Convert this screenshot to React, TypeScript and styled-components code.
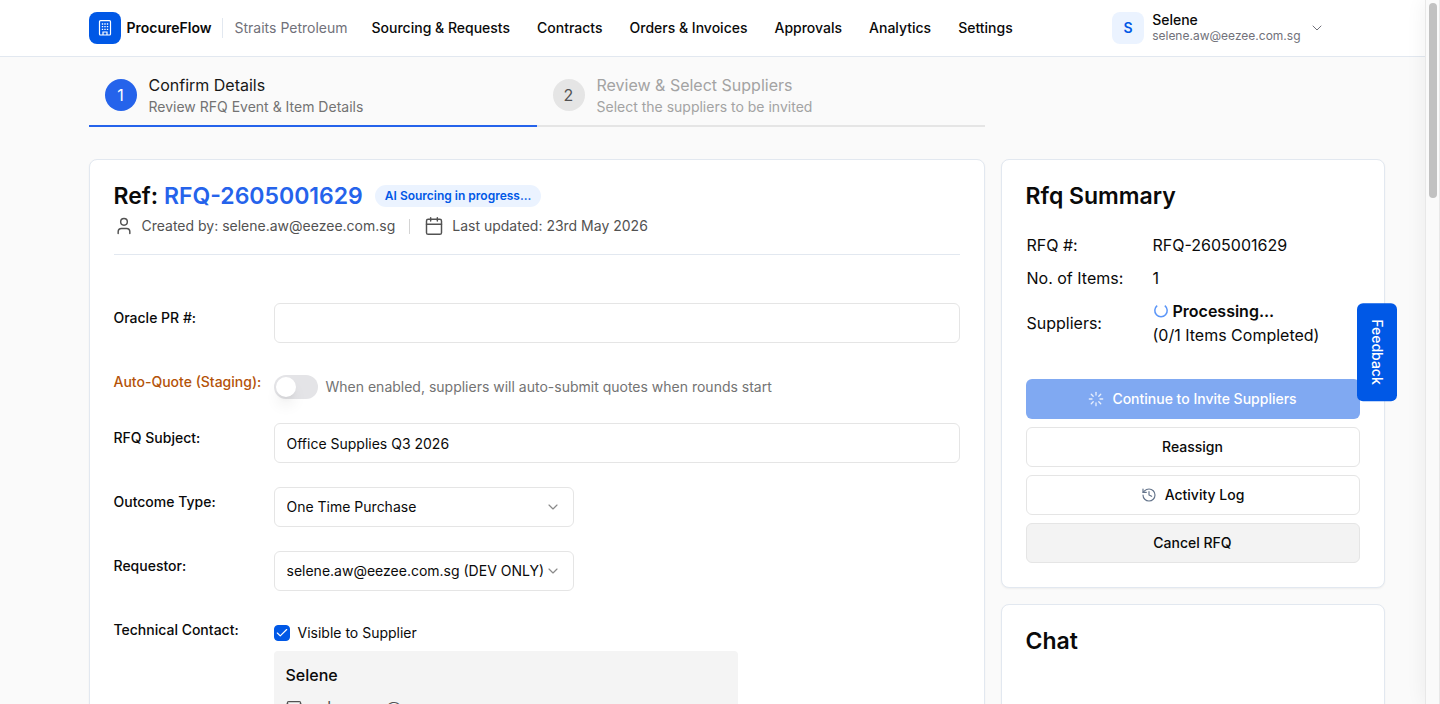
import React, { useState } from 'react';
import styled, { createGlobalStyle, css } from 'styled-components';
import { Calendar, Check, ChevronDown, History, Loader, Mail, User } from 'lucide-react';

const color = {
  primary: '#0058e6',
  blue: '#2563eb',
  text: '#0a0a0a',
  muted: '#737373',
  line: '#e2e8f0',
  field: '#e5e5e5',
};

const GlobalStyle = createGlobalStyle`
  *, *::before, *::after { box-sizing: border-box; }
  body {
    margin: 0;
    background: #fafafa;
    color: ${color.text};
    font-family: Inter, "Liberation Sans", sans-serif;
    font-size: 14px;
    line-height: 20px;
  }
  h1, h2, h3, p { margin: 0; }
  button, input, select { font: inherit; color: inherit; }
  svg { display: block; flex-shrink: 0; }
`;

const Page = styled.div`
  height: 100vh;
  overflow: hidden;
  padding-right: 15px;
`;

const Header = styled.header`
  background: #fff;
  border-bottom: 1px solid ${color.line};
`;

const HeaderInner = styled.div`
  display: flex;
  align-items: center;
  gap: 24px;
  max-width: 1280px;
  height: 56px;
  margin: 0 auto;
  padding: 0 16px;
  white-space: nowrap;
`;

const Brand = styled.a`
  display: flex;
  align-items: center;
  color: inherit;
  text-decoration: none;
`;

const Logo = styled.span`
  display: grid;
  place-items: center;
  width: 32px;
  height: 32px;
  margin-right: 6px;
  border-radius: 8px;
  background: ${color.primary};
  color: #fff;
`;

const BrandName = styled.span`
  font-weight: 600;
`;

const Company = styled.span`
  margin-left: 10px;
  padding-left: 12px;
  border-left: 1px solid ${color.line};
  color: #71717a;
`;

const Nav = styled.nav`
  display: flex;
  gap: 27px;
`;

const NavLink = styled.a`
  color: inherit;
  font-weight: 500;
  text-decoration: none;
`;

const Account = styled.button`
  display: flex;
  align-items: center;
  gap: 8px;
  margin-left: auto;
  padding: 0 12px 0 0;
  border: 0;
  background: none;
  text-align: left;
`;

const Avatar = styled.span`
  display: grid;
  place-items: center;
  width: 32px;
  height: 32px;
  border-radius: 8px;
  background: #ebf3ff;
  color: ${color.primary};
  font-weight: 600;
`;

const AccountText = styled.span`
  display: flex;
  flex-direction: column;
  line-height: 16px;
`;

const AccountName = styled.span`
  font-weight: 500;
`;

const AccountEmail = styled.span`
  color: #71717a;
  font-size: 12px;
`;

const Container = styled.div`
  max-width: 1280px;
  margin: 0 auto;
  padding: 0 16px;
`;

const Columns = styled.main`
  display: grid;
  grid-template-columns: minmax(0, 1fr) 384px;
  align-items: start;
  column-gap: 16px;
  row-gap: 32px;
  margin-right: -48px;
`;

const Steps = styled.ol`
  display: flex;
  grid-column: 1 / -1;
  margin: 0 400px 0 0;
  padding: 0;
  list-style: none;
`;

const Step = styled.li<{ $active?: boolean }>`
  display: flex;
  flex: 1;
  align-items: center;
  gap: 12px;
  padding: 16px 16px 8px;
  border-bottom: 2px solid ${(p) => (p.$active ? color.blue : color.field)};
  color: ${(p) => (p.$active ? color.muted : '#a3a3a3')};
`;

const StepNumber = styled.span<{ $active?: boolean }>`
  display: grid;
  place-items: center;
  width: 32px;
  height: 32px;
  border-radius: 50%;
  background: ${(p) => (p.$active ? color.blue : color.field)};
  color: ${(p) => (p.$active ? '#fff' : '#525252')};
  font-size: 16px;
`;

const StepTitle = styled.div<{ $active?: boolean }>`
  color: ${(p) => (p.$active ? '#171717' : '#a3a3a3')};
  font-size: 16px;
  line-height: 24px;
`;

const Card = styled.section`
  padding: 24px;
  border: 1px solid ${color.line};
  border-radius: 8px;
  background: #fff;
  box-shadow: 0 1px 2px rgba(0, 0, 0, 0.05);
`;

const Aside = styled.aside`
  display: flex;
  flex-direction: column;
  gap: 16px;
`;

const ChatCard = styled(Card)`
  min-height: 320px;
`;

const CardTitle = styled.h2`
  font-size: 23px;
  font-weight: 600;
  line-height: 24px;
`;

const FormHead = styled.header`
  margin-bottom: 48px;
  padding-bottom: 18px;
  border-bottom: 1px solid ${color.line};
`;

const TitleRow = styled.div`
  display: flex;
  align-items: center;
  gap: 12px;
  height: 24px;
`;

const RefNumber = styled.span`
  color: ${color.blue};
`;

const Badge = styled.span`
  padding: 0 10px;
  border-radius: 11px;
  background: #ebf3ff;
  color: ${color.primary};
  font-size: 12px;
  font-weight: 600;
  line-height: 22px;
`;

const Meta = styled.div`
  display: flex;
  align-items: center;
  margin-top: 8px;
  color: #525252;
`;

const MetaItem = styled.span`
  display: flex;
  align-items: center;
  gap: 8px;

  & + & {
    margin-left: 14px;
  }
  & + &::before {
    content: '';
    width: 1px;
    height: 15px;
    margin-right: 6px;
    background: #d4d4d4;
  }
`;

const Form = styled.form`
  display: grid;
  row-gap: 24px;
`;

const Row = styled.div`
  display: grid;
  grid-template-columns: 160px minmax(0, 1fr);
  align-items: start;
`;

const labelText = css<{ $warn?: boolean }>`
  padding-top: 8px;
  color: ${(p) => (p.$warn ? '#b45309' : 'inherit')};
  font-weight: 500;
  line-height: 14px;
`;

const Label = styled.label<{ $warn?: boolean }>`
  ${labelText}
`;

const GroupLabel = styled.span`
  ${labelText}
`;

const field = css`
  width: 100%;
  height: 40px;
  padding: 0 12px;
  border: 1px solid ${color.field};
  border-radius: 6px;
  background: #fff;
`;

const TextInput = styled.input`
  ${field}
`;

const SelectBox = styled.div`
  display: grid;
  align-items: center;
  max-width: 300px;

  > * {
    grid-area: 1 / 1;
  }
  > svg {
    justify-self: end;
    margin-right: 13px;
    color: #8a8a8a;
    pointer-events: none;
  }
`;

const Select = styled.select`
  ${field}
  padding-right: 28px;
  appearance: none;
`;

const SwitchRow = styled.div`
  display: flex;
  align-items: center;
  gap: 8px;
  padding-top: 8px;
  color: ${color.muted};
`;

const Switch = styled.input`
  display: flex;
  flex-shrink: 0;
  align-items: center;
  width: 44px;
  height: 24px;
  margin: 0;
  padding: 2px;
  border-radius: 12px;
  background: #e4e4e7;
  appearance: none;

  &::before {
    content: '';
    width: 20px;
    height: 20px;
    border-radius: 50%;
    background: #fff;
    box-shadow: 0 10px 15px -3px rgba(0, 0, 0, 0.1), 0 4px 6px -4px rgba(0, 0, 0, 0.1);
  }
  &:checked {
    justify-content: flex-end;
    background: ${color.primary};
  }
`;

const CheckRow = styled.label`
  display: flex;
  align-items: center;
  gap: 8px;
  padding: 8px 0;
`;

const CheckBoxWrap = styled.span`
  display: grid;
  place-items: center;

  > * {
    grid-area: 1 / 1;
  }
  > svg {
    color: #fff;
    pointer-events: none;
  }
`;

const CheckBox = styled.input`
  width: 16px;
  height: 16px;
  margin: 0;
  border: 1px solid ${color.primary};
  border-radius: 4px;
  appearance: none;

  &:checked {
    background: ${color.primary};
  }
`;

const Contact = styled.div`
  display: grid;
  row-gap: 8px;
  max-width: 464px;
  padding: 12px;
  border-radius: 4px;
  background: #f4f4f4;
  font-size: 16px;
  line-height: 24px;
`;

const ContactName = styled.h3`
  font-size: 16px;
  font-weight: 500;
`;

const ContactLine = styled.div`
  display: flex;
  align-items: center;
  gap: 8px;
  color: #525252;
`;

const SummaryTable = styled.table`
  width: 100%;
  margin: 24px 0;
  border-collapse: collapse;
  font-size: 16px;
  line-height: 24px;

  th, td {
    padding: 1px 1px 8px;
    text-align: left;
    font-weight: 400;
  }
  th {
    width: 126px;
  }
`;

const Processing = styled.div`
  display: flex;
  align-items: center;
  gap: 4px;
  font-weight: 600;
`;

const Actions = styled.div`
  display: grid;
  row-gap: 8px;
`;

const Button = styled.button<{ $kind?: 'primary' | 'gray' }>`
  display: flex;
  align-items: center;
  justify-content: center;
  gap: 8px;
  height: 40px;
  border: 1px solid ${color.field};
  border-radius: 6px;
  background: ${(p) => (p.$kind === 'gray' ? '#f3f3f3' : '#fff')};
  font-weight: 500;

  ${(p) =>
    p.$kind === 'primary' &&
    css`
      border-color: transparent;
      background: #80a9f2 border-box;
      color: #fff;
    `}

  > svg {
    color: ${(p) => (p.$kind === 'primary' ? '#e6eefc' : '#64748b')};
  }
`;

const Feedback = styled.button`
  position: fixed;
  top: 50%;
  right: 43px;
  width: 40px;
  padding: 16px 0;
  transform: translateY(-50%);
  border: 0;
  border-radius: 6px;
  background: ${color.primary};
  color: #fff;
  font-weight: 500;
  line-height: 40px;
  writing-mode: vertical-rl;
`;

const ScrollTrack = styled.div`
  position: fixed;
  top: 0;
  right: 0;
  bottom: 0;
  width: 15px;
  padding: 3px;
  border: solid #e8e8e8;
  border-width: 0 1px;
  background: #fafafa;
  box-shadow: 0 0 20px rgba(0, 0, 0, 0.07);
`;

const ScrollThumb = styled.div`
  width: 8px;
  height: 28%;
  border-radius: 4px;
  background: #c1c1c1;
`;

const BuildingIcon = () => (
  <svg width="16" height="16" viewBox="0 0 16 16" fill="none" stroke="currentColor">
    <rect x="2.5" y="0.7" width="11" height="14.3" rx="1" strokeWidth="1.2" />
    <path d="M6 15v-3h4v3" strokeWidth="1.2" />
    <path
      d="M4.8 4h1.4M7.3 4h1.4M9.8 4h1.4M4.8 6.7h1.4M7.3 6.7h1.4M9.8 6.7h1.4M4.8 9.4h1.4M7.3 9.4h1.4M9.8 9.4h1.4"
      strokeWidth="1.3"
    />
  </svg>
);

const SpinnerIcon = () => (
  <svg width="16" height="16" viewBox="0 0 16 16" fill="none" stroke="#5b96f8" strokeWidth="1.5">
    <path d="M4.2 2.6A6.2 6.2 0 1 0 11.8 2.6" />
  </svg>
);

const navItems = ['Sourcing & Requests', 'Contracts', 'Orders & Invoices', 'Approvals', 'Analytics', 'Settings'];

export default function App() {
  const [subject, setSubject] = useState('Office Supplies Q3 2026');
  const [pr, setPr] = useState('');
  const [visible, setVisible] = useState(true);

  return (
    <Page>
      <GlobalStyle />
      <Header>
        <HeaderInner>
          <Brand href="#">
            <Logo><BuildingIcon /></Logo>
            <BrandName>ProcureFlow</BrandName>
            <Company>Straits Petroleum</Company>
          </Brand>
          <Nav>
            {navItems.map((item) => (
              <NavLink key={item} href="#">{item}</NavLink>
            ))}
          </Nav>
          <Account type="button">
            <Avatar>S</Avatar>
            <AccountText>
              <AccountName>Selene</AccountName>
              <AccountEmail>selene.aw@eezee.com.sg</AccountEmail>
            </AccountText>
            <ChevronDown size={16} strokeWidth={1.5} color="#71717a" />
          </Account>
        </HeaderInner>
      </Header>

      <Container>
        <Columns>
          <Steps>
            <Step $active aria-current="step">
              <StepNumber $active>1</StepNumber>
              <div>
                <StepTitle $active>Confirm Details</StepTitle>
                Review RFQ Event &amp; Item Details
              </div>
            </Step>
            <Step>
              <StepNumber>2</StepNumber>
              <div>
                <StepTitle>Review &amp; Select Suppliers</StepTitle>
                Select the suppliers to be invited
              </div>
            </Step>
          </Steps>

          <Card>
            <FormHead>
              <TitleRow>
                <CardTitle as="h1">
                  Ref: <RefNumber>RFQ-2605001629</RefNumber>
                </CardTitle>
                <Badge>AI Sourcing in progress...</Badge>
              </TitleRow>
              <Meta>
                <MetaItem>
                  <User size={20} strokeWidth={1.75} />
                  Created by: selene.aw@eezee.com.sg
                </MetaItem>
                <MetaItem>
                  <Calendar size={20} strokeWidth={1.75} />
                  Last updated: 23rd May 2026
                </MetaItem>
              </Meta>
            </FormHead>

            <Form>
              <Row>
                <Label htmlFor="pr">Oracle PR #:</Label>
                <TextInput id="pr" value={pr} onChange={(e) => setPr(e.target.value)} />
              </Row>
              <Row>
                <Label htmlFor="auto-quote" $warn>Auto-Quote (Staging):</Label>
                <SwitchRow>
                  <Switch id="auto-quote" type="checkbox" role="switch" />
                  When enabled, suppliers will auto-submit quotes when rounds start
                </SwitchRow>
              </Row>
              <Row>
                <Label htmlFor="subject">RFQ Subject:</Label>
                <TextInput id="subject" value={subject} onChange={(e) => setSubject(e.target.value)} />
              </Row>
              <Row>
                <Label htmlFor="outcome">Outcome Type:</Label>
                <SelectBox>
                  <Select id="outcome"><option>One Time Purchase</option></Select>
                  <ChevronDown size={16} strokeWidth={1.75} />
                </SelectBox>
              </Row>
              <Row>
                <Label htmlFor="requestor">Requestor:</Label>
                <SelectBox>
                  <Select id="requestor"><option>selene.aw@eezee.com.sg (DEV ONLY)</option></Select>
                  <ChevronDown size={16} strokeWidth={1.75} />
                </SelectBox>
              </Row>
              <Row>
                <GroupLabel>Technical Contact:</GroupLabel>
                <div>
                  <CheckRow>
                    <CheckBoxWrap>
                      <CheckBox type="checkbox" checked={visible} onChange={(e) => setVisible(e.target.checked)} />
                      {visible && <Check size={14} strokeWidth={2} />}
                    </CheckBoxWrap>
                    Visible to Supplier
                  </CheckRow>
                  <Contact>
                    <ContactName>Selene</ContactName>
                    <ContactLine>
                      <Mail size={16} strokeWidth={1.75} />
                      selene.aw@eezee.com.sg
                    </ContactLine>
                  </Contact>
                </div>
              </Row>
            </Form>
          </Card>

          <Aside>
            <Card>
              <CardTitle>Rfq Summary</CardTitle>
              <SummaryTable>
                <tbody>
                  <tr><th scope="row">RFQ #:</th><td>RFQ-2605001629</td></tr>
                  <tr><th scope="row">No. of Items:</th><td>1</td></tr>
                  <tr>
                    <th scope="row">Suppliers:</th>
                    <td>
                      <Processing><SpinnerIcon />Processing...</Processing>
                      (0/1 Items Completed)
                    </td>
                  </tr>
                </tbody>
              </SummaryTable>
              <Actions>
                <Button type="button" $kind="primary" disabled>
                  <Loader size={16} strokeWidth={2} />
                  Continue to Invite Suppliers
                </Button>
                <Button type="button">Reassign</Button>
                <Button type="button">
                  <History size={16} strokeWidth={1.75} />
                  Activity Log
                </Button>
                <Button type="button" $kind="gray">Cancel RFQ</Button>
              </Actions>
            </Card>
            <ChatCard>
              <CardTitle>Chat</CardTitle>
            </ChatCard>
          </Aside>
        </Columns>
      </Container>

      <Feedback type="button">Feedback</Feedback>
      <ScrollTrack aria-hidden="true"><ScrollThumb /></ScrollTrack>
    </Page>
  );
}
